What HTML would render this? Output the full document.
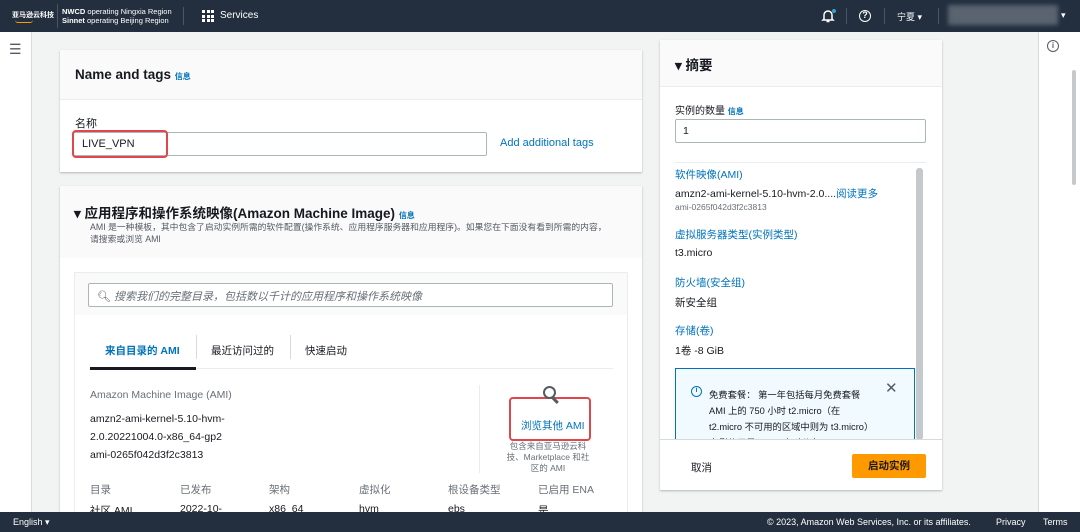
<!DOCTYPE html><html><head><meta charset="utf-8"><style>
*{box-sizing:border-box;margin:0;padding:0}
body{width:1080px;height:532px;overflow:hidden;background:#f2f3f3;font-family:"Liberation Sans","Noto Sans CJK SC",sans-serif;color:#16191f;position:relative;font-size:11px}
.a{position:absolute}
.nav{left:0;top:0;width:1080px;height:32px;background:#232f3e;color:#fff}
.foot{left:0;top:512px;width:1080px;height:20px;background:#232f3e;color:#fff;font-size:9px}
.card{background:#fff;box-shadow:0 1px 2px rgba(0,0,0,.25)}
.blue{color:#0073bb}
.inp{border:1px solid #aab7b8;background:#fff;border-radius:2px}
.g{color:#687078}
</style></head><body>
<div class="a nav">
 <div class="a" style="left:12px;top:10px;font-size:7px;font-weight:bold">亚马逊云科技</div>
 <div class="a" style="left:15px;top:20px;width:18px;height:3px;border-bottom:1.5px solid #f90;border-radius:0 0 10px 10px"></div>
 <div class="a" style="left:57px;top:4px;width:1px;height:24px;background:#4a5566"></div>
 <div class="a" style="left:62px;top:7px;font-size:7.5px;line-height:9px"><b>NWCD</b> operating Ningxia Region<br><b>Sinnet</b> operating Beijing Region</div>
 <div class="a" style="left:183px;top:7px;width:1px;height:18px;background:#4a5566"></div>
 <div class="a" style="left:202px;top:10px;width:12px;height:12px;display:grid;grid-template-columns:repeat(3,3px);gap:1.5px"><i style="background:#fff"></i><i style="background:#fff"></i><i style="background:#fff"></i><i style="background:#fff"></i><i style="background:#fff"></i><i style="background:#fff"></i><i style="background:#fff"></i><i style="background:#fff"></i><i style="background:#fff"></i></div>
 <div class="a" style="left:220px;top:10px;font-size:10px">Services</div>
 <svg class="a" style="left:820px;top:8px" width="16" height="16" viewBox="0 0 16 16"><path d="M4 11V7a4 4 0 0 1 8 0v4l1 1H3z M6.5 13.5h3" fill="none" stroke="#fff" stroke-width="1.5"/><circle cx="14" cy="3" r="2" fill="#2ea4c9"/></svg>
 <div class="a" style="left:846px;top:8px;width:1px;height:16px;background:#4a5566"></div>
 <div class="a" style="left:859px;top:10px;width:12px;height:12px;border:1.5px solid #fff;border-radius:50%;font-size:9px;text-align:center;line-height:9px;font-weight:bold">?</div>
 <div class="a" style="left:884px;top:8px;width:1px;height:16px;background:#4a5566"></div>
 <div class="a" style="left:897px;top:10px;font-size:9px">宁夏 ▾</div>
 <div class="a" style="left:938px;top:8px;width:1px;height:16px;background:#4a5566"></div>
 <div class="a" style="left:948px;top:5px;width:110px;height:20px;background:#5a6370;filter:blur(2px)"></div>
 <div class="a" style="left:1061px;top:10px;font-size:9px">▾</div>
</div>
<div class="a" style="left:0;top:32px;width:32px;height:480px;background:#fff;border-right:1px solid #d5dbdb"></div>
<div class="a" style="left:9px;top:41px;font-size:14px;color:#545b64">☰</div>
<div class="a" style="left:1038px;top:32px;width:42px;height:480px;background:#fff;border-left:1px solid #d5dbdb"></div>
<div class="a" style="left:1047px;top:40px;width:12px;height:12px;border:1.3px solid #545b64;border-radius:50%;font-size:8px;text-align:center;line-height:10px;color:#545b64;font-weight:bold">i</div>
<div class="a" style="left:1072px;top:70px;width:4px;height:115px;background:#c5c9cc;border-radius:2px"></div>

<!-- card 1 -->
<div class="a card" style="left:60px;top:50px;width:582px;height:122px">
 <div class="a" style="left:0;top:0;width:582px;height:50px;background:#fafafa;border-bottom:1px solid #eaeded"></div>
 <div class="a" style="left:15px;top:17px;font-size:13.5px;font-weight:bold">Name and tags <span class="blue" style="font-size:8px">信息</span></div>
 <div class="a" style="left:15px;top:65px;font-size:11px">名称</div>
 <div class="a inp" style="left:13px;top:82px;width:414px;height:24px"></div>
 <div class="a" style="left:12px;top:80px;width:96px;height:28px;border:2px solid #e0474c;border-radius:4px"></div>
 <div class="a" style="left:22px;top:88px;font-size:11px">LIVE_VPN</div>
 <div class="a blue" style="left:440px;top:87px;font-size:11px">Add additional tags</div>
</div>

<!-- card 2 -->
<div class="a card" style="left:60px;top:186px;width:582px;height:340px">
 <div class="a" style="left:0;top:0;width:582px;height:72px;background:#fafafa"></div>
 <div class="a" style="left:14px;top:16px;font-size:13.5px;font-weight:bold;white-space:nowrap">▾ 应用程序和操作系统映像(Amazon Machine Image) <span class="blue" style="font-size:8px">信息</span></div>
 <div class="a" style="left:30px;top:35px;font-size:8.8px;line-height:12px;color:#545b64;white-space:nowrap">AMI 是一种模板，其中包含了启动实例所需的软件配置(操作系统、应用程序服务器和应用程序)。如果您在下面没有看到所需的内容，<br>请搜索或浏览 AMI</div>
 <div class="a" style="left:14px;top:86px;width:554px;height:260px;border:1px solid #eaeded;background:#fff">
  <div class="a" style="left:0;top:0;width:552px;height:42px;background:#fafafa"></div>
  <div class="a inp" style="left:13px;top:10px;width:525px;height:24px"></div>
  <div class="a g" style="left:22px;top:15px;font-size:11px;font-style:italic;white-space:nowrap"><span style="font-style:normal;color:#545b64">🔍︎</span> 搜索我们的完整目录，包括数以千计的应用程序和操作系统映像</div>
  <div class="a blue" style="left:30px;top:70px;font-size:10.5px;font-weight:bold">来自目录的 AMI</div>
  <div class="a" style="left:121px;top:62px;width:1px;height:24px;background:#d5dbdb"></div>
  <div class="a" style="left:136px;top:70px;font-size:10.5px">最近访问过的</div>
  <div class="a" style="left:215px;top:62px;width:1px;height:24px;background:#d5dbdb"></div>
  <div class="a" style="left:230px;top:70px;font-size:10.5px">快速启动</div>
  <div class="a" style="left:15px;top:95px;width:523px;height:1px;background:#eaeded"></div>
  <div class="a" style="left:15px;top:94px;width:106px;height:3px;background:#16191f"></div>
  <div class="a g" style="left:15px;top:116px;font-size:10.5px">Amazon Machine Image (AMI)</div>
  <div class="a" style="left:15px;top:137px;font-size:10.5px;line-height:18px">amzn2-ami-kernel-5.10-hvm-<br>2.0.20221004.0-x86_64-gp2<br>ami-0265f042d3f2c3813</div>
  <div class="a" style="left:404px;top:112px;width:1px;height:88px;background:#eaeded"></div>
  <div class="a" style="left:434px;top:124px;width:82px;height:44px;border:2px solid #e0474c;border-radius:4px;background:#fff"></div>
  <div class="a" style="left:468px;top:113px;width:13px;height:13px;border:2.5px solid #545b64;border-radius:50%;background:#fff"></div>
  <div class="a" style="left:477px;top:126px;width:7px;height:2.5px;background:#545b64;transform:rotate(45deg)"></div>
  <div class="a blue" style="left:446px;top:145px;font-size:10.5px;white-space:nowrap">浏览其他 AMI</div>
  <div class="a g" style="left:430px;top:168px;width:86px;text-align:center;font-size:8.5px;line-height:11px">包含来自亚马逊云科技、Marketplace 和社区的 AMI</div>
  <div class="a g" style="left:15px;top:209px;font-size:10.5px">目录</div>
  <div class="a g" style="left:105px;top:209px;font-size:10.5px">已发布</div>
  <div class="a g" style="left:194px;top:209px;font-size:10.5px">架构</div>
  <div class="a g" style="left:284px;top:209px;font-size:10.5px">虚拟化</div>
  <div class="a g" style="left:373px;top:209px;font-size:10.5px">根设备类型</div>
  <div class="a g" style="left:463px;top:209px;font-size:10.5px">已启用 ENA</div>
  <div class="a" style="left:15px;top:230px;font-size:10.5px">社区 AMI</div>
  <div class="a" style="left:105px;top:230px;font-size:10.5px">2022-10-</div>
  <div class="a" style="left:194px;top:230px;font-size:10.5px">x86_64</div>
  <div class="a" style="left:284px;top:230px;font-size:10.5px">hvm</div>
  <div class="a" style="left:373px;top:230px;font-size:10.5px">ebs</div>
  <div class="a" style="left:463px;top:230px;font-size:10.5px">是</div>
 </div>
</div>

<!-- summary -->
<div class="a card" style="left:660px;top:40px;width:282px;height:450px">
 <div class="a" style="left:0;top:0;width:282px;height:47px;background:#fafafa;border-bottom:1px solid #eaeded"></div>
 <div class="a" style="left:15px;top:14px;font-size:13.5px;font-weight:bold">▾ 摘要</div>
 <div class="a" style="left:15px;top:62px;font-size:10px">实例的数量 <span class="blue" style="font-size:8px;font-weight:bold">信息</span></div>
 <div class="a inp" style="left:15px;top:79px;width:251px;height:24px"></div>
 <div class="a" style="left:23px;top:85px;font-size:10.5px">1</div>
 <div class="a" style="left:15px;top:122px;width:251px;height:1px;background:#eaeded"></div>
 <div class="a" style="left:256px;top:128px;width:7px;height:272px;background:#c5c9cc;border-radius:3px"></div>
 <div class="a blue" style="left:15px;top:127px;font-size:10.5px">软件映像(AMI)</div>
 <div class="a" style="left:15px;top:146px;font-size:10.5px">amzn2-ami-kernel-5.10-hvm-2.0....<span class="blue">阅读更多</span></div>
 <div class="a g" style="left:15px;top:162px;font-size:8.5px">ami-0265f042d3f2c3813</div>
 <div class="a blue" style="left:15px;top:187px;font-size:10.5px">虚拟服务器类型(实例类型)</div>
 <div class="a" style="left:15px;top:207px;font-size:10.5px">t3.micro</div>
 <div class="a blue" style="left:15px;top:235px;font-size:10.5px">防火墙(安全组)</div>
 <div class="a" style="left:15px;top:255px;font-size:10.5px">新安全组</div>
 <div class="a blue" style="left:15px;top:283px;font-size:10.5px">存储(卷)</div>
 <div class="a" style="left:15px;top:303px;font-size:10.5px">1卷 -8 GiB</div>
 <div class="a" style="left:15px;top:328px;width:240px;height:72px;background:#f1faff;border:1px solid #0073bb;overflow:hidden">
  <div class="a" style="left:15px;top:17px;width:11px;height:11px;border:1.5px solid #0073bb;border-radius:50%;font-size:7px;text-align:center;line-height:8px;color:#0073bb;font-weight:bold">i</div>
  <div class="a" style="left:33px;top:18px;font-size:9.3px;line-height:16px;width:162px">免费套餐： 第一年包括每月免费套餐 AMI 上的 750 小时 t2.micro（在 t2.micro 不可用的区域中则为 t3.micro）实例使用量，750 小时公有</div>
  <div class="a" style="left:209px;top:10px;font-size:15px;color:#545b64">✕</div>
 </div>
 <div class="a" style="left:0;top:399px;width:282px;height:51px;background:#fff;border-top:1px solid #d5dbdb"></div>
 <div class="a" style="left:31px;top:420px;font-size:10.5px">取消</div>
 <div class="a" style="left:192px;top:414px;width:74px;height:24px;background:#ff9900;border-radius:2px;font-size:10.5px;font-weight:bold;text-align:center;line-height:24px">启动实例</div>
</div>

<div class="a foot">
 <div class="a" style="left:13px;top:5px">English ▾</div>
 <div class="a" style="left:767px;top:5px">© 2023, Amazon Web Services, Inc. or its affiliates.</div>
 <div class="a" style="left:996px;top:5px">Privacy</div>
 <div class="a" style="left:1043px;top:5px">Terms</div>
</div>
</body></html>
